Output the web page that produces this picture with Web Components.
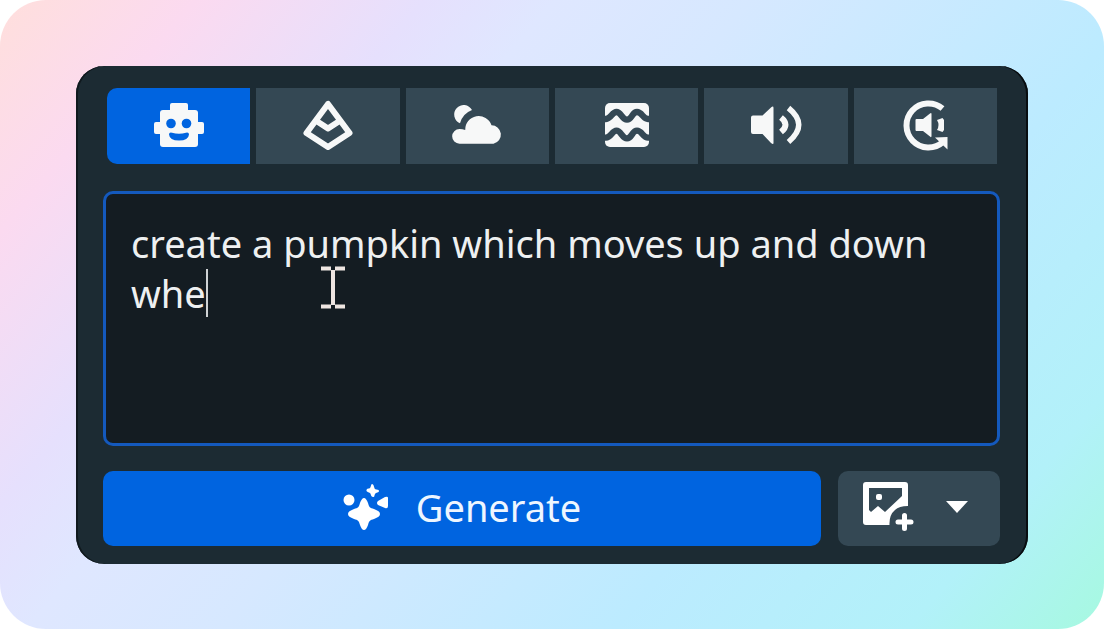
<!DOCTYPE html>
<html lang="en">
<head>
<meta charset="utf-8">
<meta name="viewport" content="width=device-width, initial-scale=1">
<title>Create with AI</title>
<style>
  body { margin: 0; background: #fff; font-family: "Noto Sans", "Open Sans", sans-serif; color: #eef0f1; }
</style>
</head>
<body>
<gradient-stage>
  <creator-panel>
    <tool-tabs slot="tabs">
      <tool-tab label="Character" selected>
        <svg viewBox="0 0 50 50" width="50" height="50">
          <rect x="16" y="2" width="18" height="12" rx="2"/>
          <rect x="0" y="21" width="50" height="12" rx="2"/>
          <rect x="6" y="9" width="38" height="37" rx="3"/>
          <g fill="#0064e0"><circle cx="17" cy="22.500" r="4.800"/><circle cx="32.500" cy="22.500" r="4.800"/>
          <path d="M15 33.500Q15 31 18 31.700Q25 34 32 31.700Q35 31 35 33.500Q34.500 39.500 25 39.500Q15.500 39.500 15 33.500Z"/></g>
        </svg>
      </tool-tab>
      <tool-tab label="Mesh">
        <svg viewBox="0 0 50 50" width="50" height="50" overflow="visible">
          <g fill="none" stroke="#f7f8f8" stroke-width="6" stroke-linejoin="round">
            <path d="M25 3L3.500 32L25 46L46.500 32Z"/><path d="M12 19L25 27.500L38 19"/></g>
        </svg>
      </tool-tab>
      <tool-tab label="Sky">
        <svg viewBox="0 0 50 50" width="50" height="50" overflow="visible">
          <path d="M20 9A19.700 19.700 0 0 0 8 22.300A9.500 9.500 0 1 1 20 9Z"/>
          <path d="M7.500 42.700A7.300 7.300 0 0 1 7.500 28Q10.500 28 13.200 29A13.500 13.500 0 0 1 39.500 24.300A9.300 9.300 0 0 1 41.500 42.700Z"/>
        </svg>
      </tool-tab>
      <tool-tab label="Terrain">
        <svg viewBox="0 0 50 50" width="50" height="50">
          <rect x="3" y="2" width="44" height="44" rx="5"/>
          <g fill="none" stroke="#344854" stroke-width="6.300">
            <path d="M1 18H4C9 18 10 11 14.500 11S20 18.700 25 18.700S30 11 35 11S41 18 46 18H49"/>
            <path d="M1 36.700H4C9 36.700 10 29.700 14.500 29.700S20 37.400 25 37.400S30 29.700 35 29.700S41 36.700 46 36.700H49"/></g>
        </svg>
      </tool-tab>
      <tool-tab label="Sound">
        <svg viewBox="0 0 50 50" width="50" height="50" overflow="visible">
          <path d="M2 14.500H11.500L20 6.500Q22.500 4.500 22.500 7V42Q22.500 44 20 42L11.500 33H2Q0 33 0 31V16.500Q0 14.500 2 14.500Z"/>
          <g fill="none" stroke="#f7f8f8"><path stroke-width="6" d="M30 16.500Q39 23.700 30 31"/><path stroke-width="5.500" d="M37.500 7Q58 23.700 37.500 41"/></g>
        </svg>
      </tool-tab>
      <tool-tab label="Ambient sound">
        <svg viewBox="0 0 50 50" width="50" height="50" overflow="visible">
          <path fill="none" stroke="#f7f8f8" stroke-width="6" d="M42.500 7.500A22 22 0 1 0 43 41"/>
          <path d="M37 19L42.500 17L44 19V29L42.500 31L37 29Q40 24 37 19Z"/>
          <path d="M35 36.500L47.500 36V48.500Z"/>
          <path d="M16.500 18H23L30 12.500Q31.500 11.500 31.500 13V35Q31.500 37 30 35.500L23 30H16.500Q15.500 30 15.500 29V19Q15.500 18 16.500 18Z"/>
        </svg>
      </tool-tab>
    </tool-tabs>
    <prompt-field slot="prompt" value="create a pumpkin which moves up and down whe"></prompt-field>
    <action-button slot="actions" variant="primary">
      <svg slot="icon" viewBox="0 0 46 46" width="46" height="46" fill="#fff" aria-hidden="true">
        <circle cx="6" cy="16" r="5.500"/>
        <path d="M21 14C22.500 14 24 16 25 19C26 23 27 24 31 25C35 26.500 37 28 37 30S35 33.500 31 35C27 36 26 37 25 41C24 44 22.500 46 21 46S18 44 17 41C16 37 15 36 11 35C7 33.500 5 32 5 30S7 26.500 11 25C15 24 16 23 17 19C18 16 19.500 14 21 14Z"/>
        <path d="M29 0C31 0 31 4 32 5S36 5 36 7S33 8 32 10S32 13 30 13S28 10 27 9S23 8 23.500 6S26 5 27 4S28 0 29 0Z"/>
        <path d="M35 17L42 13Q45 12 45 14V22Q45 25 42 24L35 21Q33 19 35 17Z"/>
      </svg>
      Generate
    </action-button>
    <action-button slot="actions" label="Add an image">
      <svg slot="icon" viewBox="0 0 52 52" width="52" height="52" fill="#fff" aria-hidden="true">
        <path fill-rule="evenodd" d="M3 1H42Q45 1 45 4V25Q36 25 32 29Q26 34 26.500 44H3Q0 44 0 41V4Q0 1 3 1ZM6 7V29L8 31L15 25L22 31L39 15V7Z"/>
        <rect x="13" y="13" width="6" height="6" rx="2"/>
        <path stroke="#fff" stroke-width="5" stroke-linecap="round" d="M41.500 34.500V47.500M35 41H48"/>
      </svg>
      <svg viewBox="0 0 22 12" width="22" height="12" fill="#fff" aria-hidden="true"><path d="M0 0H22L11 12Z"/></svg>
    </action-button>
  </creator-panel>
</gradient-stage>

<script>
const define = (name, html, setup) => customElements.define(name, class extends HTMLElement {
  connectedCallback() {
    if (this.shadowRoot) return;
    this.attachShadow({ mode: "open" }).innerHTML = html;
    if (setup) setup(this, this.shadowRoot);
  }
});

define("gradient-stage", `
  <style>
    :host { display: block; box-sizing: border-box; min-height: 100vh; padding: 66px 76px 65px; border-radius: 46px;
      background: linear-gradient(130deg, #ffdfdc 0%, #fbdaf0 12%, #e6e0fd 26%, #dfe7ff 34%, #d6e8ff 46%, #bcebff 70%, #b2f1f9 88%, #a6f9e0 100%); }
  </style><slot></slot>`);

define("creator-panel", `
  <style>
    :host { display: flex; flex-direction: column; box-sizing: border-box; padding: 22px 28px 18px 27px;
      border-radius: 28px; background: #1c2b33; box-shadow: inset 2px 0 #10191e, inset -2px 0 #080d10; }
    .tabs { margin: 0 3px 27px 4px; }
    .actions { display: flex; gap: 17px; margin-top: 25px; }
    ::slotted([variant="primary"]) { flex: 1; }
    ::slotted([label]) { width: 162px; }
  </style>
  <div class="tabs"><slot name="tabs"></slot></div>
  <slot name="prompt"></slot>
  <div class="actions"><slot name="actions"></slot></div>`);

define("tool-tabs", `
  <style>
    :host { display: flex; gap: 6px; border-radius: 10px 0 0 10px; overflow: hidden; }
    ::slotted(*) { flex: 1; }
  </style><slot></slot>`, host => host.setAttribute("role", "tablist"));

define("tool-tab", `
  <style>
    :host { display: block; }
    button { display: flex; align-items: center; justify-content: center; width: 100%; height: 76px; padding: 0;
      border: 0; background: #344854; fill: #f7f8f8; cursor: pointer; }
    :host([selected]) button { background: #0064e0; }
  </style><button role="tab"><slot></slot></button>`, (host, root) => {
    const b = root.querySelector("button");
    b.setAttribute("aria-label", host.getAttribute("label"));
    b.setAttribute("aria-selected", host.hasAttribute("selected"));
  });

define("prompt-field", `
  <style>
    :host { display: block; position: relative; }
    textarea { display: block; box-sizing: border-box; width: 100%; height: 255px; margin: 0; padding: 24px 25px;
      border: 3px solid #1459bd; border-radius: 10px; outline: 0; resize: none; background: #141c22;
      color: inherit; font: 38px/50px "Noto Sans", "Open Sans", sans-serif; caret-color: transparent; }
    .caret { position: absolute; left: 103px; top: 78px; width: 2px; height: 48px; background: #cfd2d4; }
    .pointer { position: absolute; left: 218px; top: 75px; }
  </style>
  <textarea aria-label="Describe what to create" spellcheck="false"></textarea>
  <span class="caret"></span>
  <svg class="pointer" viewBox="0 0 24 43" width="24" height="43" fill="none" stroke="#eee5e1" aria-hidden="true">
    <path stroke-width="4" d="M0 2.500H10M14 2.500H24M0 40.500H10M14 40.500H24"/><path stroke-width="4" d="M12 4V39"/>
  </svg>`, (host, root) => { root.querySelector("textarea").value = host.getAttribute("value"); });

define("action-button", `
  <style>
    :host { display: block; }
    button { display: flex; align-items: center; justify-content: center; gap: 27px; width: 100%; height: 75px; padding: 0 0 4px;
      border: 0; border-radius: 10px; background: #344854; color: #eef6ff; cursor: pointer;
      font: 38px/50px "Noto Sans", "Open Sans", sans-serif; }
    :host([variant="primary"]) button { background: #0064e0; }
    :host([label]) button { gap: 31px; padding-right: 7px; }
    .content { display: flex; align-items: center; }
  </style><button><slot name="icon"></slot><span class="content"><slot></slot></span></button>`, (host, root) => {
    if (host.hasAttribute("label")) root.querySelector("button").setAttribute("aria-label", host.getAttribute("label"));
  });
</script>
</body>
</html>
